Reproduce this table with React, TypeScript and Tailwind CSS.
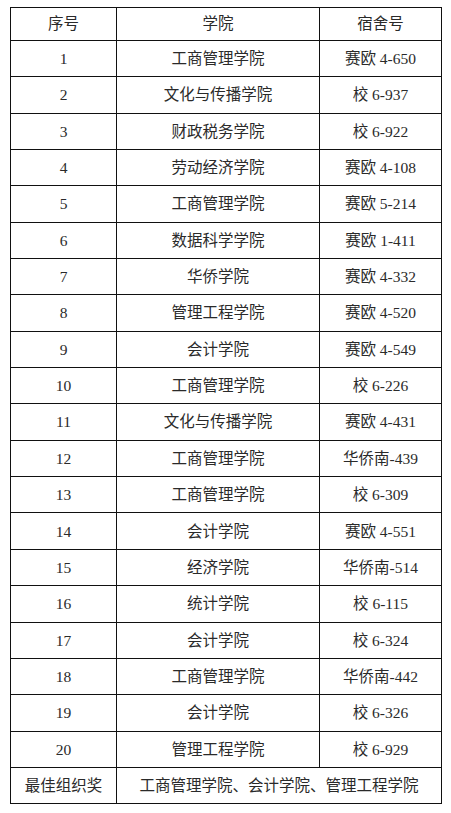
import React from "react";

const rows: [string, string, string][] = [
  ["1", "工商管理学院", "赛欧 4-650"],
  ["2", "文化与传播学院", "校 6-937"],
  ["3", "财政税务学院", "校 6-922"],
  ["4", "劳动经济学院", "赛欧 4-108"],
  ["5", "工商管理学院", "赛欧 5-214"],
  ["6", "数据科学学院", "赛欧 1-411"],
  ["7", "华侨学院", "赛欧 4-332"],
  ["8", "管理工程学院", "赛欧 4-520"],
  ["9", "会计学院", "赛欧 4-549"],
  ["10", "工商管理学院", "校 6-226"],
  ["11", "文化与传播学院", "赛欧 4-431"],
  ["12", "工商管理学院", "华侨南-439"],
  ["13", "工商管理学院", "校 6-309"],
  ["14", "会计学院", "赛欧 4-551"],
  ["15", "经济学院", "华侨南-514"],
  ["16", "统计学院", "校 6-115"],
  ["17", "会计学院", "校 6-324"],
  ["18", "工商管理学院", "华侨南-442"],
  ["19", "会计学院", "校 6-326"],
  ["20", "管理工程学院", "校 6-929"],
];

const cell = "border border-[#111] text-center align-middle p-0";

export default function App() {
  return (
    <div
      className="w-[451px] h-[813px] bg-white pt-[7px] pl-[10px] text-[#2a2a2a] text-[15.5px]"
      style={{ fontFamily: '"Liberation Serif", "Noto Sans CJK SC", serif' }}
    >
      <table className="border-collapse table-fixed w-[431px]">
        <colgroup>
          <col className="w-[106px]" />
          <col className="w-[203px]" />
          <col className="w-[122px]" />
        </colgroup>
        <tbody>
          <tr className="h-[33px]">
            <td className={cell}>序号</td>
            <td className={cell}>学院</td>
            <td className={cell}>宿舍号</td>
          </tr>
          {rows.map((r) => (
            <tr key={r[0]} className="h-[36.35px]">
              <td className={cell}>{r[0]}</td>
              <td className={cell}>{r[1]}</td>
              <td className={cell}>{r[2]}</td>
            </tr>
          ))}
          <tr className="h-[36px]">
            <td className={cell}>最佳组织奖</td>
            <td className={cell} colSpan={2}>
              工商管理学院、会计学院、管理工程学院
            </td>
          </tr>
        </tbody>
      </table>
    </div>
  );
}
